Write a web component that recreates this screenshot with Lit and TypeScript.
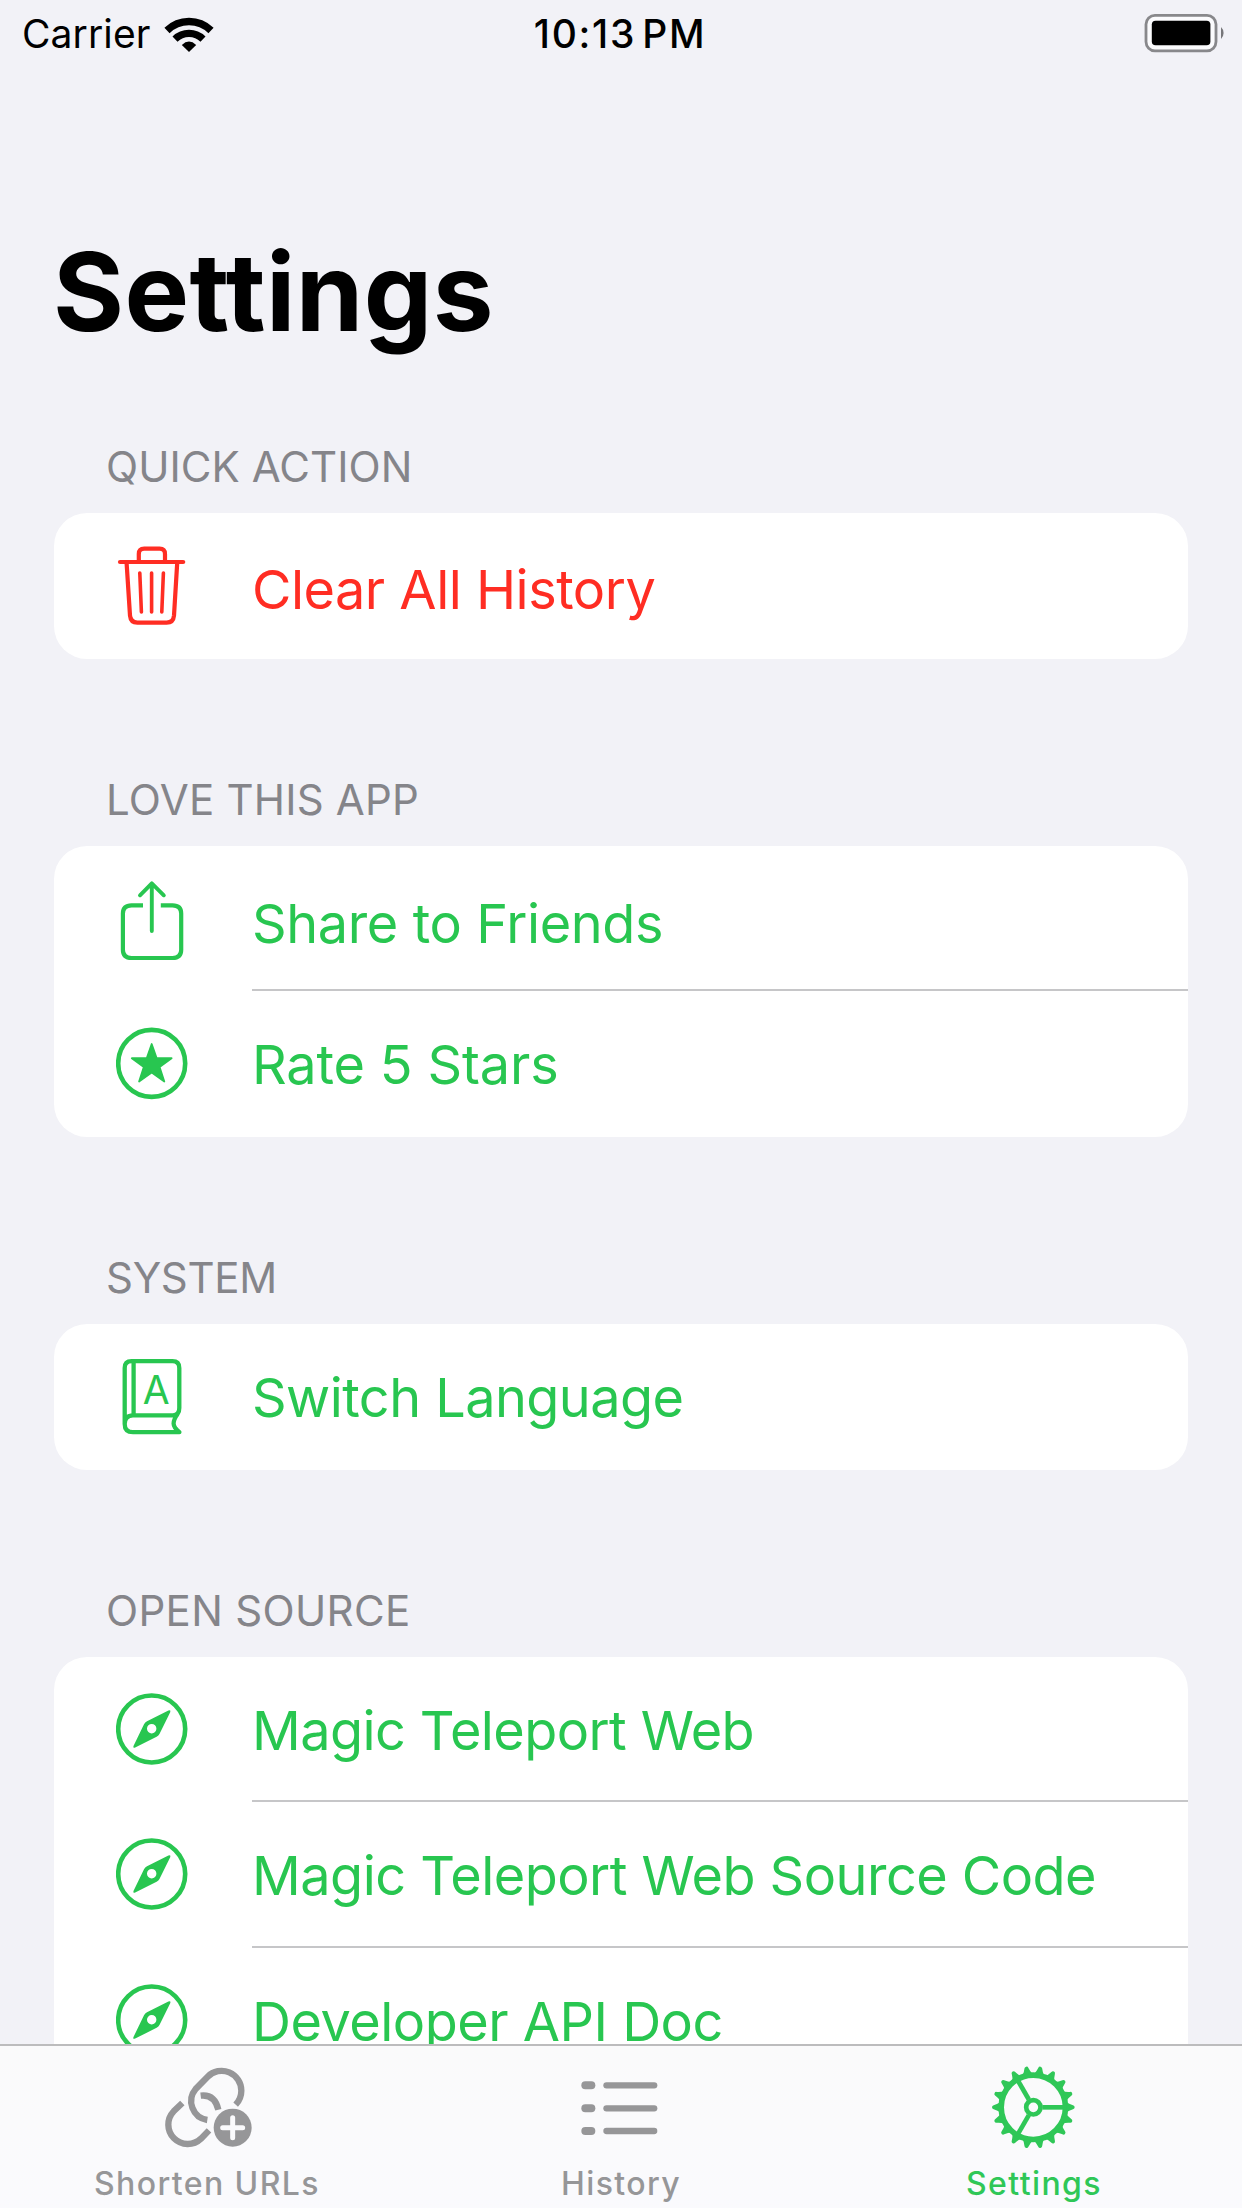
import { LitElement, html, svg, css, type TemplateResult } from "lit";
import { customElement, property } from "lit/decorators.js";
import { classMap } from "lit/directives/class-map.js";
import { styleMap } from "lit/directives/style-map.js";

type IconName = "trash" | "share" | "star" | "book" | "compass";

interface Row {
  icon: IconName;
  label: string;
  tracking: number;
  height: number;
  shift?: number;
  danger?: boolean;
}

interface Section {
  title: string;
  tracking: number;
  rows: Row[];
}

const SECTIONS: Section[] = [
  {
    title: "QUICK ACTION",
    tracking: 0.06,
    rows: [{ icon: "trash", label: "Clear All History", tracking: -0.5, height: 146, shift: 4, danger: true }],
  },
  {
    title: "LOVE THIS APP",
    tracking: 0.22,
    rows: [
      { icon: "share", label: "Share to Friends", tracking: -0.38, height: 145, shift: 5 },
      { icon: "star", label: "Rate 5 Stars", tracking: -0.15, height: 146, shift: 1 },
    ],
  },
  {
    title: "SYSTEM",
    tracking: -0.31,
    rows: [{ icon: "book", label: "Switch Language", tracking: -0.55, height: 146, shift: 1 }],
  },
  {
    title: "OPEN SOURCE",
    tracking: 0.33,
    rows: [
      { icon: "compass", label: "Magic Teleport Web", tracking: -0.58, height: 145, shift: 1 },
      { icon: "compass", label: "Magic Teleport Web Source Code", tracking: -0.53, height: 146, shift: 1 },
      { icon: "compass", label: "Developer API Doc", tracking: -0.5, height: 146, shift: 1 },
    ],
  },
];

const ROW_ICONS: Record<IconName, TemplateResult> = {
  trash: svg`
    <g fill="none" stroke="currentColor" stroke-width="4.2" stroke-linecap="round" stroke-linejoin="round">
      <path d="M4 49H67.2" />
      <path d="M22.8 48V41Q22.8 35.6 28.2 35.6H43.6Q49 35.6 49 41V48" />
      <path d="M10.6 50L14 102.5Q14.6 109.6 21.4 109.6H50.6Q57.4 109.6 58 102.5L61.2 50" />
      <path stroke-width="3.6" d="M23.8 60L25.4 99M35.6 60V99M47.4 60L45.8 99" />
    </g>`,
  share: svg`
    <g fill="none" stroke="currentColor" stroke-width="4.2">
      <path d="M27 59.3H15.5Q6.9 59.3 6.9 67.5V103.8Q6.9 112 15.5 112H56.5Q65.2 112 65.2 103.8V67.5Q65.2 59.3 56.5 59.3H44.8" />
      <path d="M35.8 38V85M24 49.3L35.8 37.3L47.8 49.3" stroke-width="3.9" stroke-linecap="round" stroke-linejoin="round" />
    </g>`,
  star: svg`
    <circle cx="35.7" cy="72.4" r="33.5" fill="none" stroke="currentColor" stroke-width="4.6" />
    <path fill="currentColor" stroke="currentColor" stroke-width="1.8" stroke-linejoin="round"
      d="M35.7 53L40.6 67.1L55.6 67.2L43.6 76L48.3 90.5L35.7 81.6L23.1 90.5L27.8 76L15.8 67.2L30.8 67.1Z" />`,
  book: svg`
    <g fill="none" stroke="currentColor" stroke-width="4.3" stroke-linejoin="round">
      <path d="M8.7 100V44Q8.7 37.2 15.5 37.2H56.5Q63.3 37.2 63.3 44V84Q63.3 91.3 57 91.3H17Q8.7 91.3 8.7 100Q8.7 108.2 17 108.2H63.4Q57.6 103.5 57.6 99.5Q57.6 95.5 61.6 90" />
      <path d="M17.6 38V91" />
    </g>
    <text class="cover" x="40.2" y="79.6" text-anchor="middle">A</text>`,
  compass: svg`
    <circle cx="35.7" cy="72" r="33.5" fill="none" stroke="currentColor" stroke-width="4.6" />
    <path fill="currentColor" fill-rule="evenodd"
      d="M52.4 53.4Q55.2 52.4 54.2 55.2L43.6 76.8Q42.6 78.8 40.6 79.8L19.2 90.6Q16.4 91.6 17.6 88.8L28 67.2Q29 65.2 31 64.2ZM35.7 67A4.7 4.7 0 1 0 35.7 76.4A4.7 4.7 0 1 0 35.7 67Z" />`,
};

const TEETH = Array.from({ length: 18 }, (_, i) => i * 20);

@customElement("status-bar")
export class StatusBar extends LitElement {
  static styles = css`
    :host {
      display: grid;
      grid-template-columns: 1fr auto 1fr;
      align-items: center;
      height: 67px;
      padding: 0 18px 0 22px;
      color: #000;
      font-size: 39px;
      line-height: 67px;
    }
    .left {
      display: flex;
      align-items: center;
      gap: 13px;
    }
    .carrier {
      letter-spacing: 0.1px;
    }
    .time {
      margin-right: 6px;
      font-weight: 500;
      letter-spacing: 1.7px;
      word-spacing: -6px;
    }
    .battery {
      justify-self: end;
    }
    svg {
      display: block;
    }
  `;

  render() {
    return html`
      <div class="left">
        <span class="carrier">Carrier</span>
        <svg width="50" height="66" viewBox="0 0 50 66">
          <g fill="none" stroke="#000">
            <path d="M3 29.5A31.5 31.5 0 0 1 47 29.5" stroke-width="7.4" />
            <path d="M11 38.1A20 20 0 0 1 39 38.1" stroke-width="7.2" />
          </g>
          <path d="M17.8 43.9Q25 37.1 32.2 43.9L25 51.1Z" />
        </svg>
      </div>
      <span class="time">10:13 PM</span>
      <svg class="battery" width="80" height="66" viewBox="0 0 80 66">
        <rect x="2" y="14.3" width="70" height="35.5" rx="9" fill="#fff" fill-opacity=".7" stroke="#88888b" stroke-width="2.8" />
        <rect x="7.8" y="19.7" width="58.6" height="24.5" rx="3.8" />
        <path d="M77 26Q79.6 28.5 79.6 32T77 38Z" fill="#77777a" />
      </svg>
    `;
  }
}

@customElement("settings-row")
export class SettingsRow extends LitElement {
  @property({ attribute: false }) row!: Row;
  @property({ type: Boolean }) divided = false;

  static styles = css`
    :host {
      display: block;
    }
    .row {
      display: grid;
      grid-template-columns: 72px 1fr;
      column-gap: 64px;
      padding-left: 62px;
      color: #28c650;
    }
    .danger {
      color: #ff2d23;
    }
    .icon {
      display: block;
      width: 72px;
      height: 146px;
    }
    .cover {
      font: 400 39px Inter, sans-serif;
      fill: currentColor;
    }
    .label {
      box-sizing: border-box;
      font-size: 54px;
      line-height: 146px;
      white-space: nowrap;
    }
    .divided {
      box-shadow: inset 0 -2px #c6c6c8;
    }
  `;

  render() {
    const { icon, label, tracking, height, shift = 0, danger = false } = this.row;
    return html`
      <div class=${classMap({ row: true, danger })} style=${styleMap({ height: `${height}px` })}>
        <svg class="icon" viewBox="0 0 72 146">${ROW_ICONS[icon]}</svg>
        <div
          class=${classMap({ label: true, divided: this.divided })}
          style=${styleMap({ height: `${height}px`, paddingTop: `${shift}px`, letterSpacing: `${tracking}px` })}
        >${label}</div>
      </div>
    `;
  }
}

@customElement("tab-bar")
export class TabBar extends LitElement {
  static styles = css`
    :host {
      display: grid;
      grid-template-columns: repeat(3, 1fr);
      flex: none;
      box-sizing: border-box;
      height: 164px;
      padding-top: 4px;
      border-top: 2px solid #bcbcbd;
      background: linear-gradient(#fafafb, #fafafd);
    }
    .tab {
      display: flex;
      flex-direction: column;
      align-items: center;
      gap: 14px;
      color: #969698;
      font-size: 32px;
      font-weight: 450;
      line-height: 40px;
      letter-spacing: 1.4px;
    }
    .active {
      color: #2fc757;
    }
    .active span {
      margin-right: 2px;
    }
    svg {
      display: block;
      width: 120px;
      height: 100px;
    }
  `;

  render() {
    return html`
      <div class="tab">
        <svg viewBox="51 30 360 300">
          <g fill="none" stroke="currentColor" stroke-width="19">
            <path d="M317 194Q334 176 334 152A59 59 0 0 0 233 110L197 147A57 57 0 0 0 232 240" />
            <path d="M157 189L131 214A58 58 0 0 0 213 296L237 271" />
            <path d="M212 167Q254 162 265 209" />
          </g>
          <circle cx="308" cy="263" r="57" fill="currentColor" />
          <path d="M278 263H338M308 233V293" stroke="#fafafc" stroke-width="15" stroke-linecap="round" />
        </svg>
        <span>Shorten URLs</span>
      </div>
      <div class="tab">
        <svg viewBox="63 30 360 300">
          ${[136, 205, 273].map(
            (y) => svg`
              <rect x="124" y=${y - 12} width="42" height="24" rx="12" fill="currentColor" />
              <rect x="190" y=${y - 9.5} width="162" height="19" rx="9.5" fill="currentColor" />`,
          )}
        </svg>
        <span>History</span>
      </div>
      <div class="tab active">
        <svg viewBox="75 30 360 300">
          <g transform="translate(250 202)" fill="none" stroke="currentColor">
            <circle r="96.5" stroke-width="17" />
            <circle r="21.5" stroke-width="14" />
            ${[0, 120, 240].map((a) => svg`<path d="M27 0H92" stroke-width="14" transform="rotate(${a})" />`)}
            ${TEETH.map(
              (a) => svg`
                <path d="M100 -15Q106 -10 119 -6Q124 -5 124 0Q124 5 119 6Q106 10 100 15Z"
                  fill="currentColor" stroke="none" transform="rotate(${a})" />`,
            )}
          </g>
        </svg>
        <span>Settings</span>
      </div>
    `;
  }
}

@customElement("app-root")
export class AppRoot extends LitElement {
  static styles = css`
    :host {
      display: flex;
      flex-direction: column;
      width: 1242px;
      height: 2208px;
      overflow: hidden;
      background: #f2f2f7;
      font-family: Inter, "Liberation Sans", sans-serif;
    }
    .content {
      flex: 1;
      min-height: 0;
      overflow: hidden;
      padding: 0 54px;
    }
    .title {
      margin: 0 0 0 -1px;
      padding-top: 165px;
      height: 94px;
      color: #000;
      font-size: 108.5px;
      font-weight: 700;
      line-height: 120px;
      letter-spacing: 0.4px;
    }
    .heading {
      box-sizing: border-box;
      height: 187px;
      margin: 0;
      padding: 120px 52px 0;
      color: #85858a;
      font-size: 42px;
      font-weight: 400;
      line-height: 42px;
    }
    .card {
      overflow: hidden;
      border-radius: 33px;
      background: #fff;
    }
  `;

  render() {
    return html`
      <status-bar></status-bar>
      <main class="content">
        <h1 class="title">Settings</h1>
        ${SECTIONS.map(
          (section) => html`
            <h2 class="heading" style=${styleMap({ letterSpacing: `${section.tracking}px` })}>${section.title}</h2>
            <div class="card">
              ${section.rows.map(
                (row, i) => html`
                  <settings-row .row=${row} ?divided=${i < section.rows.length - 1}></settings-row>
                `,
              )}
            </div>
          `,
        )}
      </main>
      <tab-bar></tab-bar>
    `;
  }
}
